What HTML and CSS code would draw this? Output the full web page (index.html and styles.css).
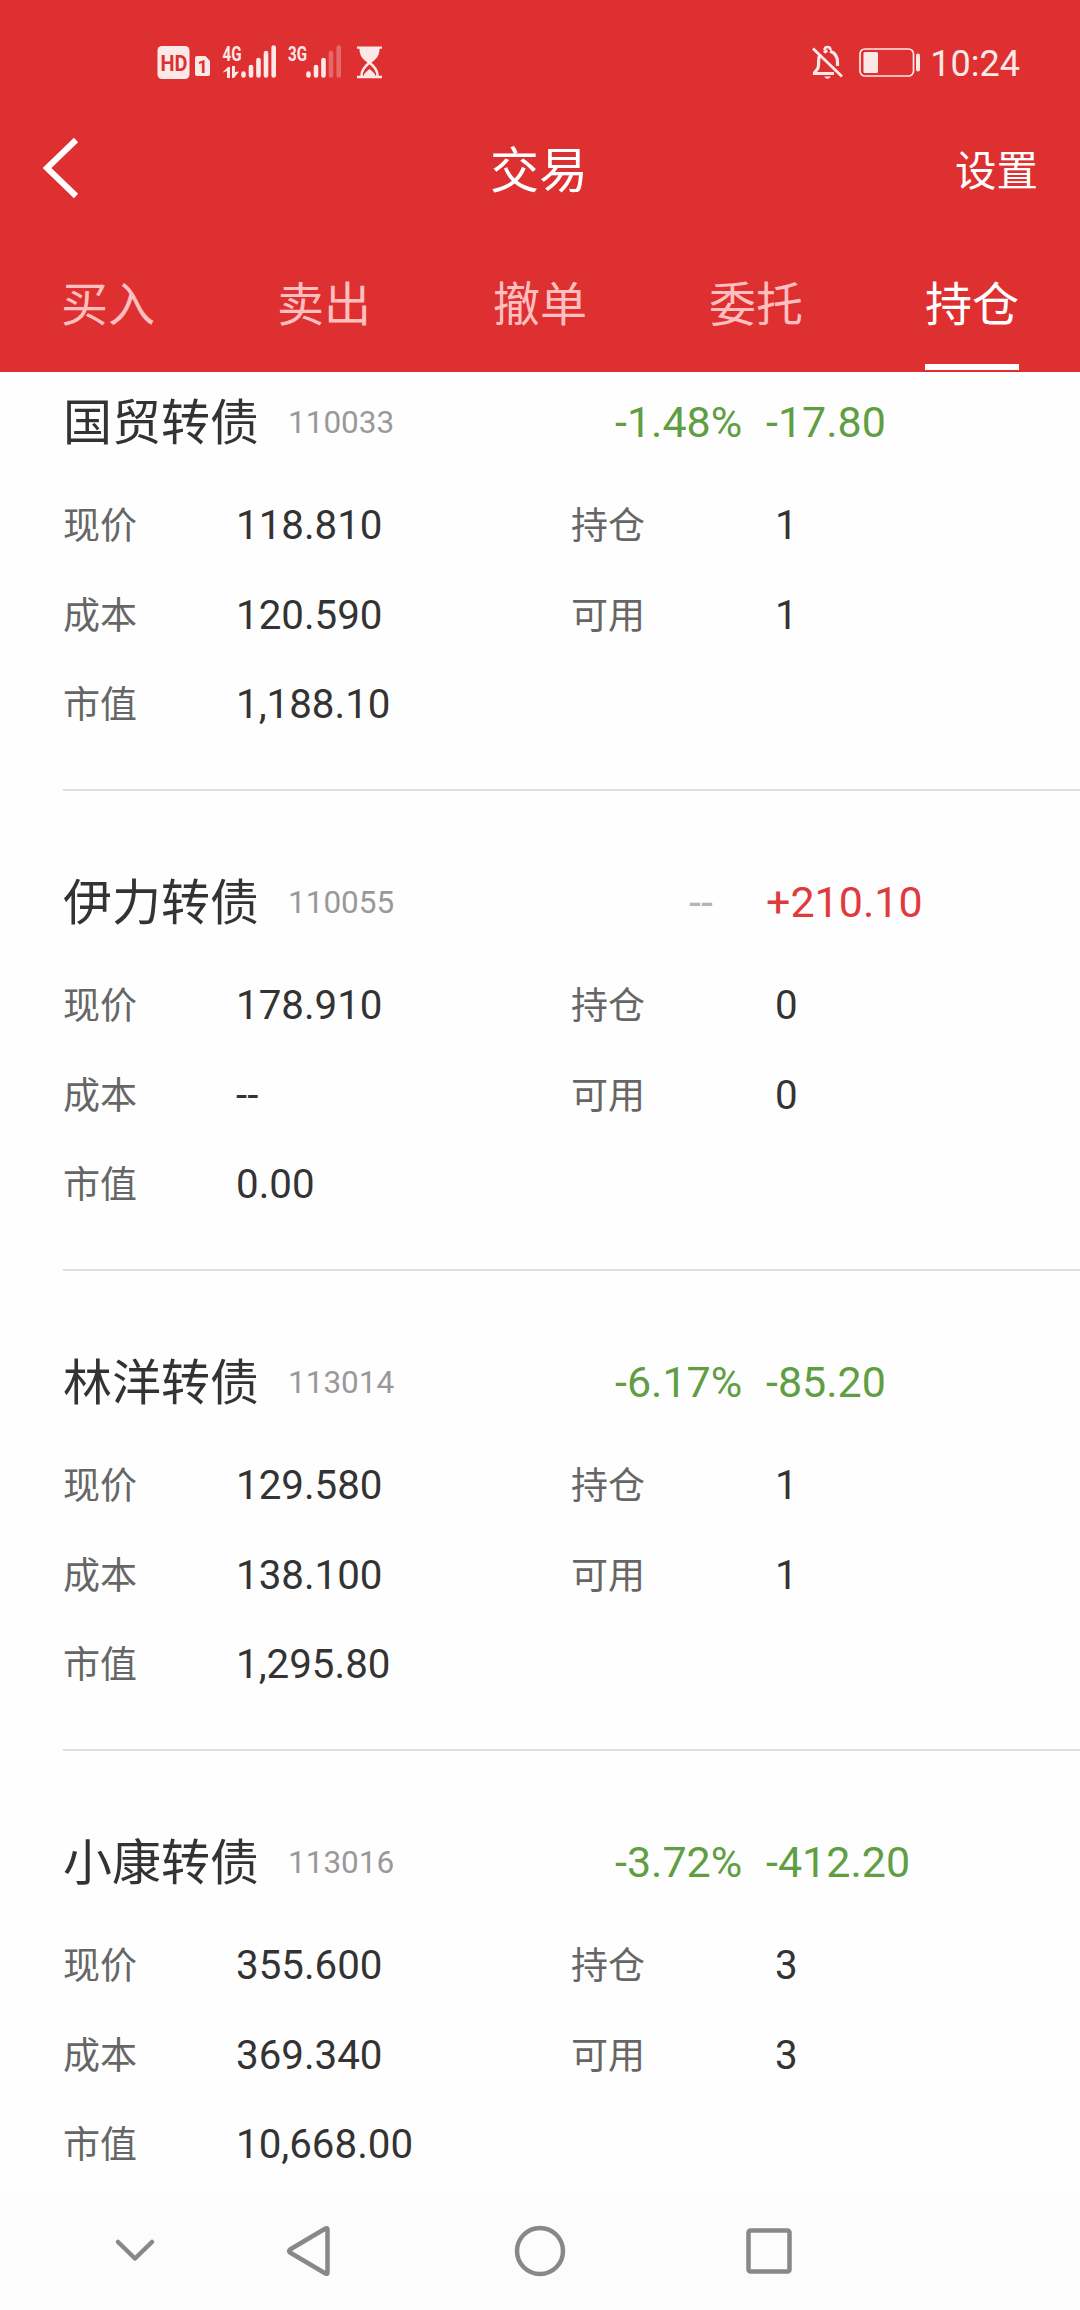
FILE: index.html
```html
<!DOCTYPE html>
<html lang="zh-CN">

<head>
    <meta charset="UTF-8">
    <meta name="viewport" content="width=device-width, initial-scale=1.0">
    <title>交易</title>
    <link rel="stylesheet" href="styles.css">
</head>

<body>
    <header>
        <div class="status-bar">
            <svg class="status-left" width="240" height="52" viewBox="150 36 240 52" fill="#fde8e8">
                <!-- HD + sim -->
                <rect x="157.5" y="46" width="32" height="33" rx="4.5" />
                <text class="hd" x="160.5" y="70.5" textLength="27" lengthAdjust="spacingAndGlyphs">HD</text>
                <path d="M197 56h8.5l4.5 5v13q0 2-2 2h-11q-2 0-2-2v-16q0-2 2-2z" />
                <text class="sim" x="197.5" y="73">1</text>
                <!-- 4G signal -->
                <text class="net" x="222.5" y="60.500" textLength="19" lengthAdjust="spacingAndGlyphs">4G</text>
                <path d="M223 72l5-5h2v11h-3v-7l-4 1.500zM232 66h3v6l4-.5-5 6.500h-2z" />
                <g stroke="#fde8e8" stroke-width="4.600" stroke-linecap="round">
                    <path d="M243.500 73.500v2M251 67v8.500M258.500 60v15.500M266 53v22.500M273.700 47.500v28" />
                    <path d="M308.500 73.500v2M316 67v8.500M323.500 60v15.500" />
                    <path d="M331 53v22.500M338.700 47.500v28" opacity=".3" />
                </g>
                <text class="net" x="288" y="60.500" textLength="19" lengthAdjust="spacingAndGlyphs">3G</text>
                <!-- hourglass -->
                <path d="M357 46.500h25v2.300h-2.500c0 7-3 10-8.500 14.200h-3c-5.500-4.200-8.500-7.200-8.500-14.200H357z" />
                <path d="M361.500 76c0-6 3-9 8-13.500M377.500 76c0-6-3-9-8-13.500" fill="none" stroke="#fde8e8" stroke-width="2.500" />
                <path d="M357 75.700h25v2.600h-25zM363.500 76c1-3.500 3-4.500 6-7c3 2.500 5 3.500 6 7z" />
            </svg>
            <div class="status-right">
                <svg width="112" height="52" viewBox="808 36 112 52" fill="none" stroke="#fde8e8">
                    <path d="M824 51.500c1-1 2-1.500 3.500-1.500M830 50c5 2 7.500 6 7.500 11v4M834 72.500H814.500c0-3 4-3 4-8c0-4 0-7 1-10" stroke-width="3.200" />
                    <path d="M824.500 49c0-4 6-4 6 0" stroke-width="2.500" />
                    <path d="M813 47.500L842 75.500" stroke-width="2.800" />
                    <path d="M824 75.500q3.500 4.500 7 0z" fill="#fde8e8" stroke="none" />
                    <rect x="860" y="48" width="53.500" height="27" rx="5" stroke-width="1.700" />
                    <rect x="863.500" y="51" width="14.500" height="21" rx="1.500" fill="#fde8e8" stroke="none" />
                    <path d="M918 54.500v14" stroke-width="4" stroke-linecap="round" />
                </svg>
                <span class="time">10:24</span>
            </div>
        </div>
        <div class="title-bar">
            <svg class="back" width="40" height="64" viewBox="0 0 40 64" fill="none" stroke="#fff" stroke-width="6">
                <path d="M36 3L7 31L36 59" />
            </svg>
            <h1>交易</h1>
            <a class="settings">设置</a>
        </div>
        <nav class="tabs">
            <a>买入</a>
            <a>卖出</a>
            <a>撤单</a>
            <a>委托</a>
            <a class="active">持仓</a>
        </nav>
    </header>

    <main>
        <div class="list">
            <section class="card">
                <div class="card-head">
                    <h2>国贸转债</h2>
                    <span class="code">110033</span>
                    <span class="rate down">-1.48%</span>
                    <span class="profit down">-17.80</span>
                </div>
                <div class="details">
                    <label>现价</label><span>118.810</span><label>持仓</label><span>1</span>
                    <label>成本</label><span>120.590</span><label>可用</label><span>1</span>
                    <label>市值</label><span>1,188.10</span>
                </div>
            </section>
            <section class="card">
                <div class="card-head">
                    <h2>伊力转债</h2>
                    <span class="code">110055</span>
                    <span class="rate none">--</span>
                    <span class="profit up">+210.10</span>
                </div>
                <div class="details">
                    <label>现价</label><span>178.910</span><label>持仓</label><span>0</span>
                    <label>成本</label><span>--</span><label>可用</label><span>0</span>
                    <label>市值</label><span>0.00</span>
                </div>
            </section>
            <section class="card">
                <div class="card-head">
                    <h2>林洋转债</h2>
                    <span class="code">113014</span>
                    <span class="rate down">-6.17%</span>
                    <span class="profit down">-85.20</span>
                </div>
                <div class="details">
                    <label>现价</label><span>129.580</span><label>持仓</label><span>1</span>
                    <label>成本</label><span>138.100</span><label>可用</label><span>1</span>
                    <label>市值</label><span>1,295.80</span>
                </div>
            </section>
            <section class="card">
                <div class="card-head">
                    <h2>小康转债</h2>
                    <span class="code">113016</span>
                    <span class="rate down">-3.72%</span>
                    <span class="profit down">-412.20</span>
                </div>
                <div class="details">
                    <label>现价</label><span>355.600</span><label>持仓</label><span>3</span>
                    <label>成本</label><span>369.340</span><label>可用</label><span>3</span>
                    <label>市值</label><span>10,668.00</span>
                </div>
            </section>
        </div>
    </main>

    <footer>
        <svg width="1080" height="118" viewBox="0 2192 1080 118" fill="none" stroke="#888" stroke-width="4.500" stroke-linecap="round" stroke-linejoin="round">
            <path d="M118 2242L135 2258.500L152 2242" />
            <path d="M327.500 2229.500v43q0 2-2 1L290 2252.500q-1.500-1.500 0-3l35.500-21q2-1 2 1z" />
            <circle cx="540" cy="2251" r="23" />
            <rect x="748.500" y="2230.500" width="41" height="41" rx="2" />
        </svg>
    </footer>
</body>

</html>
```

FILE: styles.css
```css
* {
    margin: 0;
    padding: 0;
    box-sizing: border-box;
}

body {
    width: 1080px;
    height: 2310px;
    display: flex;
    flex-direction: column;
    overflow: hidden;
    background: #fefefe;
    color: #333;
    font-family: Roboto, "Noto Sans CJK SC", sans-serif;
}

header {
    height: 372px;
    background: #de3031;
    color: #fff;
}

.status-bar {
    height: 124px;
    padding: 36px 60px 0 150px;
    display: flex;
    justify-content: space-between;
    align-items: flex-start;
}

.status-bar text {
    font-weight: bold;
}

.hd {
    font-size: 22px;
    fill: #de3031;
}

.sim {
    font-size: 18px;
    fill: #de3031;
}

.net {
    font-size: 21px;
}

.status-right {
    display: flex;
    align-items: center;
    gap: 10px;
}

.time {
    padding-top: 2px;
    font-size: 36px;
    line-height: 52px;
    color: #fde8e8;
}

.title-bar {
    height: 92px;
    padding: 0 42px 0 40px;
    display: grid;
    grid-template-columns: 1fr auto 1fr;
    align-items: center;
}

.back {
    margin-bottom: 2px;
}

h1 {
    padding-top: 3px;
    font-size: 49px;
    font-weight: 400;
    line-height: 89px;
}

.settings {
    padding-bottom: 5px;
    font-size: 41.5px;
    justify-self: end;
}

.tabs {
    height: 156px;
    display: grid;
    grid-template-columns: repeat(5, 216px);
    justify-items: center;
}

.tabs a {
    height: 154px;
    padding-top: 54px;
    font-size: 47px;
    line-height: 70px;
    color: #ffbfbf;
    border-bottom: 6px solid transparent;
}

.tabs a.active {
    color: #fff;
    border-bottom-color: #fff;
}

main {
    flex: 1;
    overflow: hidden;
}

/* first card is partly scrolled under the header */
.list {
    margin-top: -61px;
}

.card {
    height: 480px;
    margin-left: 63px;
    padding-top: 59px;
    border-bottom: 2px solid #dedede;
}

.card-head {
    height: 103px;
    margin-bottom: 8px;
    display: grid;
    grid-template-columns: 225px 327px 151px 1fr;
    align-items: center;
}

h2 {
    padding-bottom: 6px;
    font-size: 49px;
    font-weight: 400;
}

.code {
    padding-top: 2px;
    font-size: 31.5px;
    color: #999;
}

.rate,
.profit {
    font-size: 43px;
}

.none {
    padding-left: 74px;
    color: #b5b5b5;
}

.down {
    color: #5f9e42;
}

.up {
    color: #e03a3c;
}

.details {
    display: grid;
    grid-template-columns: 173px 335px 204px 1fr;
    grid-auto-rows: 89.5px;
    align-items: center;
    font-size: 40.3px;
}

.details label {
    padding-bottom: 5px;
    font-size: 37px;
    color: #666;
}

footer {
    height: 118px;
    background: #fcfcfc;
}

footer svg {
    display: block;
}
```
